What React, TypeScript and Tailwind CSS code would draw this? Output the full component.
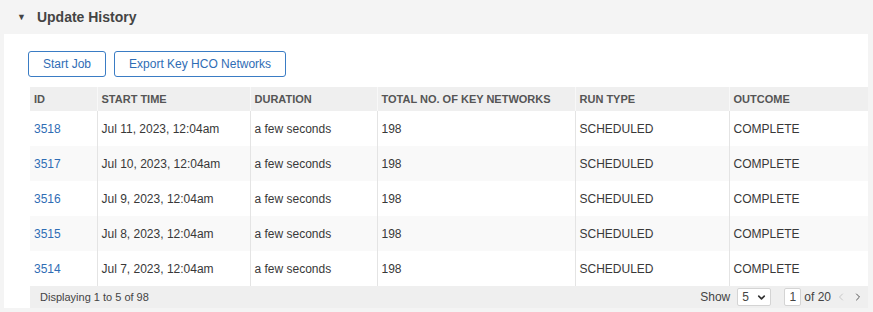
import { ChevronDown, ChevronLeft, ChevronRight } from 'lucide-react';

const rows = [
  { id: '3518', start: 'Jul 11, 2023, 12:04am' },
  { id: '3517', start: 'Jul 10, 2023, 12:04am' },
  { id: '3516', start: 'Jul 9, 2023, 12:04am' },
  { id: '3515', start: 'Jul 8, 2023, 12:04am' },
  { id: '3514', start: 'Jul 7, 2023, 12:04am' },
];

const columns = [
  { label: 'ID', w: 'w-[67px]' },
  { label: 'Start Time', w: 'w-[153px]' },
  { label: 'Duration', w: 'w-[127px]' },
  { label: 'Total No. of Key Networks', w: 'w-[198px]' },
  { label: 'Run Type', w: 'w-[154px]' },
  { label: 'Outcome', w: 'w-[139px]' },
];

export default function App() {
  return (
    <div className="w-[873px] h-[312px] bg-[#f4f4f4] font-['Liberation_Sans',Arial,sans-serif] text-[#383838] overflow-hidden">
      <div className="h-[34px] flex items-center pl-[17px]">
        <span className="text-[9px] text-[#444] mr-[11px] mt-[1px]">▼</span>
        <h2 className="text-[14px] font-bold text-[#444]">Update History</h2>
      </div>

      <div className="ml-[4px] w-[864px] h-[274px] bg-white pt-[17px] pl-[24px]">
        <div className="flex gap-[8px]">
          <button className="h-[26px] px-[14px] border border-[#3a7cc4] rounded-[3px] text-[12px] text-[#2f6db5] bg-white">
            Start Job
          </button>
          <button className="h-[26px] px-[14px] border border-[#3a7cc4] rounded-[3px] text-[12px] text-[#2f6db5] bg-white">
            Export Key HCO Networks
          </button>
        </div>

        <div className="mt-[10px] ml-[2px] w-[838px]">
          <table className="w-[838px] table-fixed border-collapse">
            <thead>
              <tr className="h-[24px] bg-[#efefef]">
                {columns.map((c, i) => (
                  <th
                    key={c.label}
                    className={`${c.w} text-left text-[11px] font-bold uppercase text-[#555] pl-[4px] ${i > 0 ? 'border-l border-[#f8f8f8]' : ''}`}
                  >
                    {c.label}
                  </th>
                ))}
              </tr>
            </thead>
            <tbody>
              {rows.map((r, idx) => (
                <tr key={r.id} className={`h-[35px] text-[12px] ${idx % 2 === 1 ? 'bg-[#f9f9f9]' : 'bg-white'}`}>
                  <td className="pl-[4px] text-[#2f6db5]">{r.id}</td>
                  <td className="pl-[4px] border-l border-[#e4e4e4]">{r.start}</td>
                  <td className="pl-[4px] border-l border-[#e4e4e4]">a few seconds</td>
                  <td className="pl-[4px] border-l border-[#e4e4e4]">198</td>
                  <td className="pl-[4px] border-l border-[#e4e4e4]">SCHEDULED</td>
                  <td className="pl-[4px] border-l border-[#e4e4e4]">COMPLETE</td>
                </tr>
              ))}
            </tbody>
          </table>

          <div className="h-[22px] bg-[#efefef] flex items-center pl-[10px] pr-[4px] text-[11px] text-[#444] whitespace-nowrap">
            <span>Displaying 1 to 5 of 98</span>
            <div className="ml-auto flex items-center text-[12px]">
              <span className="mr-[7px]">Show</span>
              <div className="w-[34px] h-[18px] bg-white border border-[#d4d4d4] rounded-[2px] flex items-center pl-[4px] pr-[3px]">
                <span>5</span>
                <ChevronDown className="ml-auto w-[11px] h-[11px] text-[#333]" strokeWidth={3.5} />
              </div>
              <div className="ml-[13px] w-[17px] h-[18px] bg-white border border-[#d4d4d4] rounded-[2px] flex items-center justify-center">
                1
              </div>
              <span className="ml-[3px]">of 20</span>
              <ChevronLeft className="ml-[4px] w-[12px] h-[12px] text-[#c8c8c8]" strokeWidth={2} />
              <ChevronRight className="ml-[5px] w-[12px] h-[12px] text-[#555]" strokeWidth={2} />
            </div>
          </div>
        </div>
      </div>
    </div>
  );
}
